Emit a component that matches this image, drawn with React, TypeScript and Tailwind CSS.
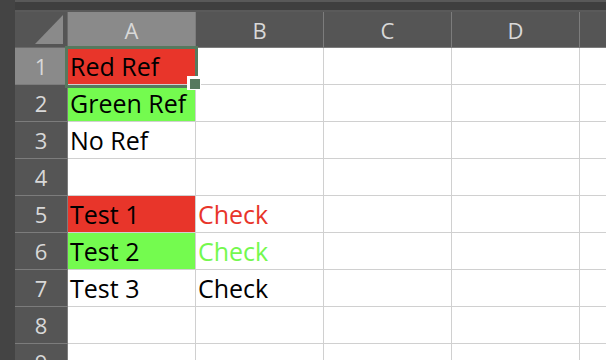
import React from "react";

// Petite feuille de calcul façon Excel (thème sombre pour les en-têtes).
const COLS = ["A", "B", "C", "D", "E"];

type Cell = { text?: string; bg?: string; color?: string };

const ROWS: Cell[][] = [
  [{ text: "Red Ref", bg: "bg-[#e8352a]" }],
  [{ text: "Green Ref", bg: "bg-[#74fb4f]" }],
  [{ text: "No Ref" }],
  [],
  [{ text: "Test 1", bg: "bg-[#e8352a]" }, { text: "Check", color: "text-[#e8352a]" }],
  [{ text: "Test 2", bg: "bg-[#74fb4f]" }, { text: "Check", color: "text-[#74f84e]" }],
  [{ text: "Test 3" }, { text: "Check" }],
  [],
  [],
];

export default function App() {
  return (
    <div
      className="flex h-[360px] w-[606px] overflow-hidden bg-[#444444]"
      style={{ fontFamily: '"Open Sans", "Noto Sans", sans-serif' }}
    >
      <div className="w-[15px] shrink-0 bg-[#444444]" />
      <div className="flex min-w-0 flex-1 flex-col">
        <div className="h-[2px] shrink-0 bg-[#595959]" />
        <div className="h-[8px] shrink-0 bg-[#3f3f3f]" />
        <div className="h-[2px] shrink-0 bg-[#5a5a5a]" />

        <div className="relative">
          <div className="grid grid-cols-[53px_repeat(5,128px)] grid-rows-[36px_repeat(9,37px)]">
            {/* coin */}
            <div className="relative border-r border-b border-[#6a6a6a] bg-[#555555]">
              <svg className="absolute left-[20px] top-[3px]" width="29" height="29" viewBox="0 0 29 29">
                <polygon points="28,0 28,29 0,29" fill="#8a8a8a" />
              </svg>
            </div>
            {COLS.map((c, i) => (
              <div
                key={c}
                className={`flex items-center justify-center border-r border-b border-[#7c7c7c] text-[22px] leading-none text-[#d8d8d8] ${
                  i === 0 ? "bg-[#8a8a8a]" : "bg-[#555555]"
                }`}
              >
                {c}
              </div>
            ))}

            {ROWS.map((row, r) => (
              <React.Fragment key={r}>
                <div
                  className={`flex items-center justify-center border-r border-b border-[#7c7c7c] text-[22px] leading-none text-[#d8d8d8] ${
                    r === 0 ? "bg-[#8a8a8a]" : "bg-[#555555]"
                  }`}
                >
                  {r + 1}
                </div>
                {COLS.map((c, i) => {
                  const cell = row[i] ?? {};
                  return (
                    <div
                      key={c}
                      className={`flex items-center overflow-visible whitespace-nowrap border-r border-b border-[#d0d0d0] pl-[2px] text-[25px] leading-none ${
                        cell.bg ?? "bg-white"
                      } ${cell.color ?? "text-black"}`}
                    >
                      {cell.text}
                    </div>
                  );
                })}
              </React.Fragment>
            ))}
          </div>

          {/* sélection A1 */}
          <div className="pointer-events-none absolute left-[50px] top-[34px] h-[42px] w-[133px] border-[3px] border-[#56795e]" />
          <div className="pointer-events-none absolute left-[172px] top-[64px] h-[14px] w-[14px] bg-white pl-[3px] pt-[3px]">
            <div className="h-[10px] w-[10px] bg-[#56795e]" />
          </div>
        </div>
      </div>
    </div>
  );
}
